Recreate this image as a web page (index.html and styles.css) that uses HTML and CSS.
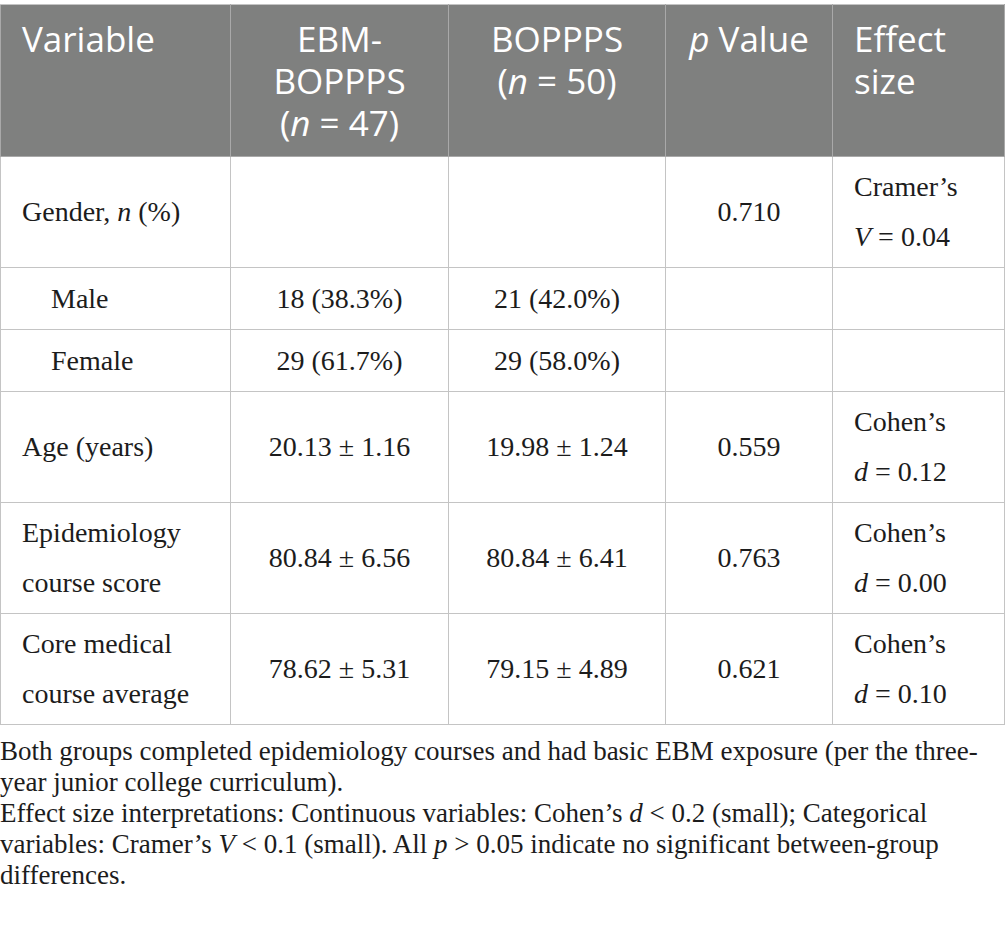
FILE: index.html
```html
<!DOCTYPE html>
<html lang="en">
<head>
<meta charset="utf-8">
<title>Table</title>
<link rel="stylesheet" href="styles.css">
</head>
<body>
<table class="data">
  <colgroup>
    <col class="c1"><col class="c2"><col class="c3"><col class="c4"><col class="c5">
  </colgroup>
  <thead>
    <tr>
      <th class="left">Variable</th>
      <th>EBM-BOPPPS <span class="nw">(<i>n</i> = 47)</span></th>
      <th>BOPPPS <span class="nw">(<i>n</i> = 50)</span></th>
      <th class="nw"><i>p</i> Value</th>
      <th class="left">Effect size</th>
    </tr>
  </thead>
  <tbody>
    <tr>
      <td class="left">Gender, <i>n</i> (%)</td>
      <td></td>
      <td></td>
      <td>0.710</td>
      <td class="left">Cramer’s <span class="nw"><i>V</i> = 0.04</span></td>
    </tr>
    <tr class="single">
      <td class="left sub">Male</td>
      <td>18 (38.3%)</td>
      <td>21 (42.0%)</td>
      <td></td>
      <td></td>
    </tr>
    <tr class="single">
      <td class="left sub">Female</td>
      <td>29 (61.7%)</td>
      <td>29 (58.0%)</td>
      <td></td>
      <td></td>
    </tr>
    <tr>
      <td class="left">Age (years)</td>
      <td>20.13 ± 1.16</td>
      <td>19.98 ± 1.24</td>
      <td>0.559</td>
      <td class="left">Cohen’s <span class="nw"><i>d</i> = 0.12</span></td>
    </tr>
    <tr>
      <td class="left">Epidemiology course score</td>
      <td>80.84 ± 6.56</td>
      <td>80.84 ± 6.41</td>
      <td>0.763</td>
      <td class="left">Cohen’s <span class="nw"><i>d</i> = 0.00</span></td>
    </tr>
    <tr>
      <td class="left">Core medical course average</td>
      <td>78.62 ± 5.31</td>
      <td>79.15 ± 4.89</td>
      <td>0.621</td>
      <td class="left">Cohen’s <span class="nw"><i>d</i> = 0.10</span></td>
    </tr>
  </tbody>
</table>
<div class="notes">
  <p>Both groups completed epidemiology courses and had basic EBM exposure (per the three-year junior college curriculum).</p>
  <p>Effect size interpretations: Continuous variables: Cohen’s <i>d</i> &lt; 0.2 (small); Categorical variables: Cramer’s <i>V</i> &lt; 0.1 (small). All <i>p</i> &gt; 0.05 indicate no significant between-group differences.</p>
</div>
</body>
</html>
```

FILE: styles.css
```css
html, body {
  margin: 0;
  padding: 0;
  background: #ffffff;
}
body {
  padding-top: 4px;
  font-family: "Liberation Serif", "Times New Roman", serif;
  color: #1c1c1c;
}
.data {
  width: 1005px;
  border-collapse: collapse;
  table-layout: fixed;
  border: 1px solid #c4c4c4;
}
.c1 { width: 230px; }
.c2 { width: 218px; }
.c3 { width: 217px; }
.c4 { width: 167px; }
.c5 { width: 172px; }

.data th {
  background: #7f807f;
  color: #ffffff;
  font-family: "Open Sans", "Noto Sans", sans-serif;
  font-weight: 400;
  font-size: 35px;
  line-height: 42px;
  text-align: center;
  vertical-align: top;
  padding: 13px 21px 12px;
  border: 1px solid #a9a9a9;
  border-top-color: #c4c4c4;
}
.data td {
  font-size: 28px;
  line-height: 50px;
  text-align: center;
  vertical-align: middle;
  padding: 5px 21px 5px;
  border: 1px solid #c4c4c4;
}
.data .single td { padding-top: 6px; }
.data .left { text-align: left; }
.data td.sub { padding-left: 50px; }
.nw { white-space: nowrap; }

.notes {
  margin-top: 11px;
  font-size: 27px;
  line-height: 31px;
  color: #1c1c1c;
}
.notes p { margin: 0; }
```
